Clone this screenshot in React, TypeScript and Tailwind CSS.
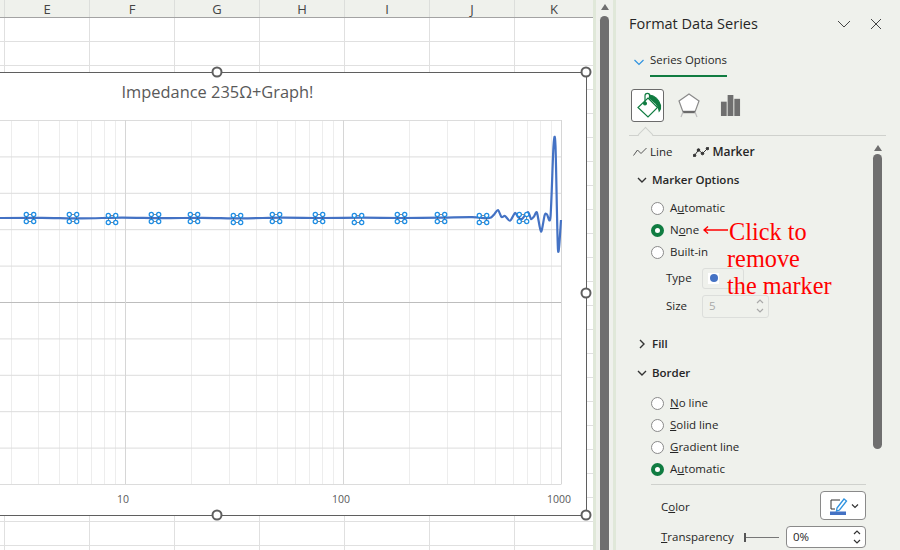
import { ReactNode } from 'react'

const columns = [
  { label: '', width: 'w-[5px]' },
  { label: 'E', width: 'w-[85px]' },
  { label: 'F', width: 'w-[85px]' },
  { label: 'G', width: 'w-[85px]' },
  { label: 'H', width: 'w-[85px]' },
  { label: 'I', width: 'w-[85px]' },
  { label: 'J', width: 'w-[85px]' },
  { label: 'K', width: 'flex-1' },
]
const rows = Array.from({ length: 23 }, (_, i) => i)

const decadeStarts = [-313, -95, 123, 341]
const minorFactors = [2, 3, 4, 5, 6, 7, 8, 9]
const gridYs = Array.from({ length: 11 }, (_, i) => 120.5 + i * 36.4)
const markerXs = [28, 71, 110, 153, 192, 235, 274, 317, 356, 399, 439, 481, 521]

const seriesPoints: [number, number][] = [
  [-153, 218], [0, 218], [40, 217.8], [80, 218.4], [120, 217.6], [160, 218.2], [200, 217.8], [240, 218.4],
  [280, 217.6], [320, 218], [360, 217.6], [400, 218], [440, 217.6], [470, 217.2], [484, 218.3], [489, 217.6],
  [492.5, 214], [496, 210], [499.5, 217], [503, 216], [508, 220.7], [513, 213], [516, 217], [520, 219],
  [526, 212], [529, 219], [532, 216.5], [535, 212.7], [539, 231.7], [542.7, 215], [545, 214.4], [548.5, 216.7],
  [551.5, 146], [553.5, 146], [556, 250], [559, 220],
]

// smooth line through the points, as the chart draws it
function smoothPath(points: [number, number][]) {
  let d = `M${points[0][0]} ${points[0][1]}`
  for (let i = 0; i < points.length - 1; i++) {
    const [x0, y0] = points[Math.max(i - 1, 0)]
    const [x1, y1] = points[i]
    const [x2, y2] = points[i + 1]
    const [x3, y3] = points[Math.min(i + 2, points.length - 1)]
    const k = 0.14
    d += `C${x1 + (x2 - x0) * k} ${y1 + (y2 - y0) * k} ${x2 - (x3 - x1) * k} ${y2 - (y3 - y1) * k} ${x2} ${y2}`
  }
  return d
}

function Marker({ x, y }: { x: number; y: number }) {
  return (
    <g fill="#fff" stroke="#1c8ce3" strokeWidth="1.2">
      <path d="M-3.5-3.5H3.5M-3.5 3.5H3.5M-3.5-3.5V3.5M3.5-3.5V3.5" transform={`translate(${x} ${y})`} fill="none" stroke="#555" strokeWidth="0.7" />
      <circle cx={x - 3.7} cy={y - 3.5} r="2.1" />
      <circle cx={x + 3.7} cy={y - 3.5} r="2.1" />
      <circle cx={x - 3.7} cy={y + 3.5} r="2.1" />
      <circle cx={x + 3.7} cy={y + 3.5} r="2.1" />
    </g>
  )
}

function PlotArea() {
  return (
    <svg viewBox="-153 119 738 372" className="block h-[372px] w-[738px]">
      {decadeStarts.map((start) =>
        minorFactors.map((k) => {
          const x = Math.round(start + 218 * Math.log10(k)) + 0.5
          return <line key={`${start}-${k}`} x1={x} x2={x} y1="120" y2="484" stroke="#ededed" />
        }),
      )}
      {gridYs.map((y, i) => (
        <line key={y} x1="-153" x2="559.5" y1={y} y2={y} stroke={i === 5 ? '#bdbdbd' : '#dcdcdc'} />
      ))}
      {[123.5, 341.5, 559.5].map((x) => (
        <line key={x} x1={x} x2={x} y1="120" y2="484" stroke="#d6d6d6" />
      ))}
      <path d={smoothPath(seriesPoints)} fill="none" stroke="#4472c4" strokeWidth="2.2" strokeLinejoin="round" />
      {markerXs.map((x, i) => (
        <Marker key={x} x={x} y={i % 3 === 2 ? 219 : 218} />
      ))}
    </svg>
  )
}

function Handle({ className }: { className: string }) {
  return <span className={`absolute h-[11px] w-[11px] -translate-x-1/2 -translate-y-1/2 rounded-full border-2 border-[#5f5f5f] bg-white ${className}`} />
}

function Chart() {
  return (
    <div className="absolute left-[-152px] top-[72px] h-[444px] w-[739px] border-[1.5px] border-[#5f5f5f] bg-white">
      <div className="h-[46px] pt-[8px] text-center font-['Open_Sans',sans-serif] text-[16.4px] leading-[22px] text-[#595959]">
        Impedance 235Ω+Graph!
      </div>
      <PlotArea />
      <span className="absolute left-[274px] top-[419px] -translate-x-1/2 font-['Open_Sans',sans-serif] text-[10.5px] text-[#595959]">10</span>
      <span className="absolute left-[492px] top-[419px] -translate-x-1/2 font-['Open_Sans',sans-serif] text-[10.5px] text-[#595959]">100</span>
      <span className="absolute left-[710px] top-[419px] -translate-x-1/2 font-['Open_Sans',sans-serif] text-[10.5px] text-[#595959]">1000</span>
      <Handle className="left-[368px] top-[-1px]" />
      <Handle className="left-[737px] top-[-1px]" />
      <Handle className="left-[737px] top-[220px]" />
      <Handle className="left-[368px] top-[442px]" />
      <Handle className="left-[737px] top-[442px]" />
    </div>
  )
}

function Sheet() {
  return (
    <div className="relative h-full w-[593px] shrink-0 overflow-hidden bg-white">
      <div className="flex h-[18px] border-b border-[#a3a3a3] bg-[#eff1ec]">
        {columns.map((col, i) => (
          <div
            key={col.label + i}
            className={`${col.width} ${i < 7 ? 'border-r border-[#dcdedb]' : ''} text-center font-['Open_Sans',sans-serif] text-[13px] leading-[19px] text-[#444]`}
          >
            {col.label}
          </div>
        ))}
      </div>
      {rows.map((row) => (
        <div key={row} className="flex h-[24px] border-b border-[#e0e0e0]">
          {columns.map((col, i) => (
            <div key={col.label + i} className={`${col.width} ${i < 7 ? 'border-r border-[#e0e0e0]' : ''}`} />
          ))}
        </div>
      ))}
      <Chart />
    </div>
  )
}

function SheetScrollbar() {
  return (
    <div className="flex h-full w-[23px] shrink-0 flex-col items-center border-x-[3px] border-[#e0e8d9] bg-[#eff1ec]">
      <span className="mt-[4px] h-0 w-0 border-x-[4.5px] border-b-[6px] border-x-transparent border-b-[#6f6f6f]" />
      <span className="mt-[6px] w-[9px] flex-1 rounded-t-full bg-[#6f6f6f]" />
    </div>
  )
}

function Radio({ checked, children }: { checked?: boolean; children: ReactNode }) {
  return (
    <div className="flex h-[22px] items-center pl-[22px]">
      <span
        className={`mr-[6px] h-[13px] w-[13px] rounded-full ${checked ? 'border-[4px] border-[#107c41] bg-white' : 'border border-[#8a8a8a] bg-white'}`}
      />
      <span>{children}</span>
    </div>
  )
}

function Chevron({ open }: { open?: boolean }) {
  return (
    <svg viewBox="0 0 10 10" className="mr-[5px] h-[10px] w-[10px]" fill="none" stroke="#333" strokeWidth="1.4">
      <path d={open ? 'M1 3l4 4 4-4' : 'M3 1l4 4-4 4'} />
    </svg>
  )
}

function SectionHeader({ open, label, className }: { open?: boolean; label: string; className: string }) {
  return (
    <div className={`flex h-[24px] items-center pl-[8px] font-semibold ${className}`}>
      <Chevron open={open} />
      {label}
    </div>
  )
}

function SpinArrows({ color }: { color: string }) {
  return (
    <svg viewBox="0 0 8 16" className="h-[16px] w-[8px]" fill="none" stroke={color} strokeWidth="1.2">
      <path d="M1 5l3-3 3 3M1 11l3 3 3-3" />
    </svg>
  )
}

function Tabs() {
  return (
    <div className="flex h-[46px] items-center">
      <div className="flex h-[33px] w-[33px] items-center justify-center rounded-[3px] border border-[#6b6b6b] bg-white">
        <svg viewBox="0 0 28 28" className="h-[28px] w-[28px]" fill="none" stroke="#107c41" strokeWidth="1.2">
          <path d="M14 7 L23.5 16.5 L14 26 L4 16.5 Z" />
          <path d="M11 11V4.8a2.4 2.4 0 0 1 4.8 0V7" />
          <circle cx="11" cy="12.5" r="1.4" fill="#107c41" />
          <path d="M15.5 4c5 0.5 9.5 4.5 11 10.5 0.4 2.5-0.4 4.5-1.3 5.5-0.2-3-1-5-3.2-7.5L15.5 7z" fill="#107c41" />
        </svg>
      </div>
      <svg viewBox="0 0 24 28" className="ml-[13px] h-[28px] w-[24px]" fill="none" stroke="#8a8a8a" strokeWidth="1.2">
        <path d="M12 3 L22 10 L18 21 H6 L2 10 Z" fill="#fff" />
        <path d="M6 21 H18" stroke="#6b6b6b" strokeWidth="2.4" />
        <path d="M6 21 L4 26 M18 21 L20 26" stroke="#bdbdbd" />
      </svg>
      <svg viewBox="0 0 20 22" className="ml-[19px] h-[21px] w-[21px]" fill="#6f6f6f">
        <rect x="0" y="7" width="6" height="15" />
        <rect x="7" y="0" width="6" height="22" />
        <rect x="14" y="4" width="6" height="18" />
      </svg>
    </div>
  )
}

function Panel() {
  return (
    <div className="relative flex h-full flex-1 flex-col overflow-hidden bg-[#eff1ec] pl-[13px] font-['Open_Sans',sans-serif] text-[11.5px] text-[#262626]">
      <div className="flex h-[48px] shrink-0 items-center justify-between pr-[17px]">
        <span className="text-[14.5px] text-[#262626]">Format Data Series</span>
        <div className="flex items-center gap-[18px]">
          <svg viewBox="0 0 14 14" className="h-[14px] w-[14px]" fill="none" stroke="#444" strokeWidth="1">
            <path d="M1 4l6 6 6-6" />
          </svg>
          <svg viewBox="0 0 14 14" className="h-[14px] w-[14px]" fill="none" stroke="#444" strokeWidth="1">
            <path d="M2 2l10 10M12 2L2 12" />
          </svg>
        </div>
      </div>
      <div className="flex h-[30px] shrink-0 items-start pl-[5px]">
        <svg viewBox="0 0 10 10" className="mr-[6px] mt-[9px] h-[10px] w-[10px]" fill="none" stroke="#2f93e0" strokeWidth="1.2">
          <path d="M0.5 3l4.5 4.5L9.5 3" />
        </svg>
        <span className="h-[29px] border-b-2 border-[#107c41] pt-[3px] text-[11.4px]">Series Options</span>
      </div>
      <div className="mt-[4px] shrink-0 pl-[2px]">
        <Tabs />
      </div>
      <div className="relative mr-[14px] mt-[7px] h-px shrink-0 bg-[#cfd1cd]">
        <span className="absolute left-[11px] top-[-6px] h-[11px] w-[11px] rotate-45 border-l border-t border-[#cfd1cd] bg-[#eff1ec]" />
      </div>
      <div className="flex flex-1">
        <div className="w-[244px]">
          <div className="flex h-[32px] items-center pl-[4px]">
            <svg viewBox="0 0 14 10" className="mr-[3px] h-[10px] w-[14px]" fill="none" stroke="#555" strokeWidth="1">
              <path d="M0.5 8.5L4.5 3l3.5 3.5L13.5 1" />
            </svg>
            <span>Line</span>
            <svg viewBox="0 0 16 10" className="ml-[21px] mr-[3px] h-[10px] w-[16px]" fill="none" stroke="#333" strokeWidth="1">
              <path d="M1.5 8.5L5.5 3l4 3.5L14.5 1.5" />
              <g fill="#333">
                <circle cx="1.5" cy="8.5" r="1.3" />
                <circle cx="5.5" cy="3" r="1.3" />
                <circle cx="9.5" cy="6.5" r="1.3" />
                <circle cx="14.5" cy="1.5" r="1.3" />
              </g>
            </svg>
            <span className="text-[12px] font-semibold">Marker</span>
          </div>
          <SectionHeader open label="Marker Options" className="" />
          <div className="mt-[5px]">
            <Radio>A<u>u</u>tomatic</Radio>
            <Radio checked>N<u>o</u>ne</Radio>
            <Radio>Built-in</Radio>
          </div>
          <div className="mt-[2px] flex h-[26px] items-center pl-[37px]">
            <span className="w-[36px]">Type</span>
            <div className="flex h-[21px] w-[42px] items-center rounded-[3px] border border-[#dcdedb] pl-[5px]">
              <span className="flex h-[11px] w-[11px] items-center justify-center bg-white">
                <span className="h-[8px] w-[8px] rounded-full bg-[#4472c4]" />
              </span>
            </div>
          </div>
          <div className="mt-[1px] flex h-[28px] items-center pl-[37px]">
            <span className="w-[36px]">Size</span>
            <div className="flex h-[23px] w-[67px] items-center justify-between rounded-[3px] border border-[#dcdedb] pl-[6px] pr-[4px] text-[#a9a9a9]">
              5
              <SpinArrows color="#a9a9a9" />
            </div>
          </div>
          <SectionHeader label="Fill" className="mt-[12px]" />
          <SectionHeader open label="Border" className="mt-[5px]" />
          <div className="mt-[7px]">
            <Radio><u>N</u>o line</Radio>
            <Radio><u>S</u>olid line</Radio>
            <Radio><u>G</u>radient line</Radio>
            <Radio checked>A<u>u</u>tomatic</Radio>
          </div>
        </div>
        <div className="flex w-[9px] flex-col items-center">
          <span className="mt-[9px] h-0 w-0 border-x-[4.5px] border-b-[6px] border-x-transparent border-b-[#6f6f6f]" />
          <span className="mt-[3px] h-[295px] w-[9px] rounded-full bg-[#6f6f6f]" />
        </div>
      </div>
      <div className="absolute left-[35px] right-[34px] top-[484px] h-px bg-[#cfd1cd]" />
      <div className="absolute left-[45px] right-[34px] top-[491px] flex h-[29px] items-center justify-between">
        <span className="mt-[2px]">C<u>o</u>lor</span>
        <div className="flex h-[29px] w-[46px] items-center gap-[3px] rounded-[4px] border border-[#8a8a8a] bg-white pl-[9px]">
          <svg viewBox="0 0 18 18" className="h-[18px] w-[18px]" fill="none">
            <path d="M1 3H10M1 3V12H5" stroke="#333" />
            <path d="M7 11L14 2l2.5 2L9.5 13l-3 1z" fill="#fff" stroke="#2f93e0" strokeWidth="1.3" />
            <rect x="0" y="14.5" width="16" height="3.5" fill="#4472c4" />
          </svg>
          <svg viewBox="0 0 8 8" className="h-[8px] w-[8px]" fill="none" stroke="#333" strokeWidth="1.2">
            <path d="M1 2.5l3 3 3-3" />
          </svg>
        </div>
      </div>
      <div className="absolute left-[45px] right-[34px] top-[526px] flex h-[22px] items-center">
        <span className="w-[83px]"><u>T</u>ransparency</span>
        <div className="relative h-px w-[35px] bg-[#777]">
          <span className="absolute left-0 top-[-4px] h-[9px] w-[2px] bg-[#555]" />
        </div>
        <div className="ml-[7px] flex h-[22px] flex-1 items-center justify-between rounded-[4px] border border-[#8a8a8a] bg-white pl-[6px] pr-[4px]">
          0%
          <SpinArrows color="#333" />
        </div>
      </div>
      <div className="absolute left-[87px] top-[218px] font-['Liberation_Serif',serif] text-[24.3px] leading-[27px] text-[#ff0000]">
        <div className="flex items-center">
          <svg viewBox="0 0 25 10" className="mr-[1px] mt-[-4px] h-[10px] w-[25px]" fill="none" stroke="#ff0000" strokeWidth="1.4">
            <path d="M25 5H1M5 1.5L1 5l4 3.5" />
          </svg>
          Click to
        </div>
        <div className="pl-[24px]">remove</div>
        <div className="pl-[24px]">the marker</div>
      </div>
    </div>
  )
}

export default function App() {
  return (
    <div className="flex h-[550px] w-[900px] overflow-hidden">
      <Sheet />
      <SheetScrollbar />
      <Panel />
    </div>
  )
}
